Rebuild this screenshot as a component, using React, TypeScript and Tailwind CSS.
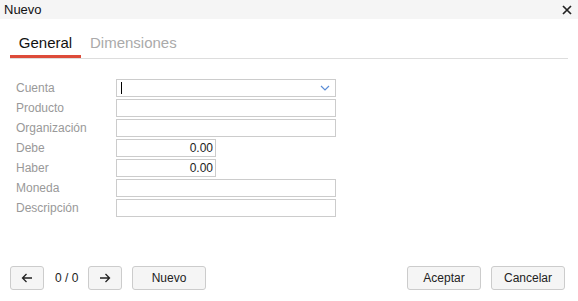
import React from "react";

const font = { fontFamily: '"Liberation Sans", Arial, sans-serif' };

function Row({ label, children }: { label: string; children: React.ReactNode }) {
  return (
    <div className="flex items-center h-[20px]">
      <div className="w-[100px] text-[12px] text-[#999]">{label}</div>
      {children}
    </div>
  );
}

function Input({ w = 220, value = "" }: { w?: number; value?: string }) {
  return (
    <div
      className={`h-[18px] border border-[#ccc] bg-white text-[12px] text-[#222] flex items-center justify-end pr-[2px] ${
        w === 220 ? "w-[220px]" : "w-[100px]"
      }`}
    >
      {value}
    </div>
  );
}

export default function App() {
  return (
    <div style={font} className="w-[578px] h-[301px] bg-white relative overflow-hidden">
      <div className="h-[19px] bg-[#f5f5f5] flex items-center justify-between pl-[4px] pr-[6px]">
        <span className="text-[13px] text-[#111]">Nuevo</span>
        <svg width="10" height="10" viewBox="0 0 10 10">
          <path d="M1 1L9 9M9 1L1 9" stroke="#222" strokeWidth="1.7" />
        </svg>
      </div>
      <div className="mx-[10px] mt-[12px] flex border-b border-[#ddd] h-[28px]">
        <div className="w-[71px] h-[27px] flex justify-center items-start border-b-[3px] border-[#dd4b39] text-[15px] text-[#111] leading-[20px] pt-[2px]">
          General
        </div>
        <div className="ml-[9px] text-[15px] text-[#aaa] leading-[20px] pt-[2px]">Dimensiones</div>
      </div>
      <div className="ml-[16px] mt-[19px] flex flex-col">
        <Row label="Cuenta">
          <div className="w-[220px] h-[18px] border border-[#ccc] flex items-center justify-between pl-[4px] pr-[5px]">
            <div className="w-[1px] h-[12px] bg-black" />
            <svg width="10" height="6" viewBox="0 0 10 6">
              <path d="M1 1L5 5L9 1" stroke="#5b8dd6" strokeWidth="1.2" fill="none" />
            </svg>
          </div>
        </Row>
        <Row label="Producto"><Input /></Row>
        <Row label="Organización"><Input /></Row>
        <Row label="Debe"><Input w={100} value="0.00" /></Row>
        <Row label="Haber"><Input w={100} value="0.00" /></Row>
        <Row label="Moneda"><Input /></Row>
        <Row label="Descripción"><Input /></Row>
      </div>
      <div className="absolute left-[10px] right-[13px] top-[266px] flex items-center">
        <button className="w-[34px] h-[24px] border border-[#ccc] rounded-[3px] bg-[#f5f5f5] flex items-center justify-center">
          <svg width="12" height="10" viewBox="0 0 12 10">
            <path d="M11 5H1.5M5.5 1L1.5 5L5.5 9" stroke="#222" strokeWidth="1.3" fill="none" />
          </svg>
        </button>
        <span className="ml-[11px] w-[33px] text-[12px] text-[#222]">0 / 0</span>
        <button className="w-[34px] h-[24px] border border-[#ccc] rounded-[3px] bg-[#f5f5f5] flex items-center justify-center">
          <svg width="12" height="10" viewBox="0 0 12 10">
            <path d="M1 5H10.5M6.5 1L10.5 5L6.5 9" stroke="#222" strokeWidth="1.3" fill="none" />
          </svg>
        </button>
        <button className="ml-[10px] w-[74px] h-[24px] border border-[#ccc] rounded-[3px] bg-[#f5f5f5] text-[12px] text-[#222]">
          Nuevo
        </button>
        <div className="flex-1" />
        <button className="w-[74px] h-[24px] border border-[#ccc] rounded-[3px] bg-[#f5f5f5] text-[12px] text-[#222]">
          Aceptar
        </button>
        <button className="ml-[10px] w-[74px] h-[24px] border border-[#ccc] rounded-[3px] bg-[#f5f5f5] text-[12px] text-[#222]">
          Cancelar
        </button>
      </div>
    </div>
  );
}
